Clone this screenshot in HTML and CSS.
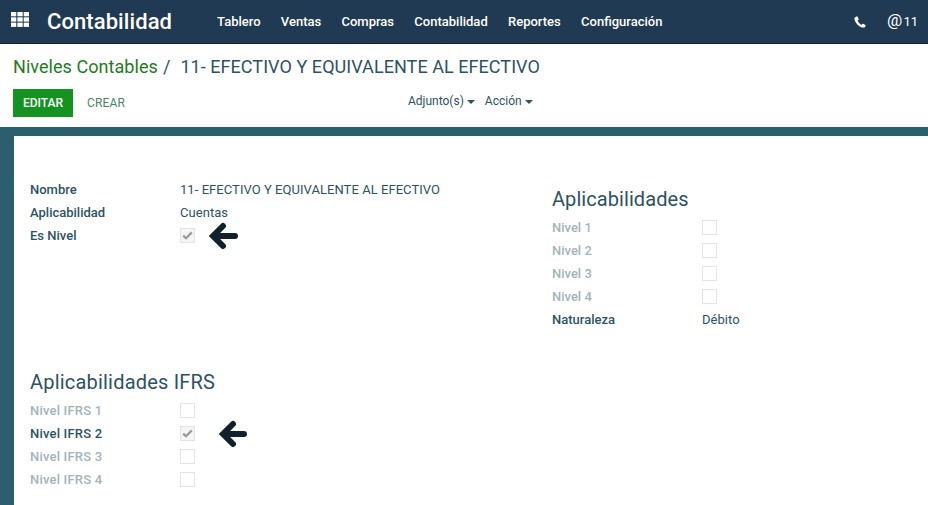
FILE: index.html
```html
<!DOCTYPE html>
<html lang="es">
<head>
    <meta charset="UTF-8">
    <title>Niveles Contables</title>
    <link rel="stylesheet" href="styles.css">
</head>
<body>
    <header class="topbar">
        <svg class="apps-icon" width="18" height="15" viewBox="0 0 18 15" fill="#fff">
            <rect x="0" y="0" width="5.3" height="4.3"/><rect x="6.4" y="0" width="5.3" height="4.3"/><rect x="12.7" y="0" width="5.3" height="4.3"/>
            <rect x="0" y="5.3" width="5.3" height="4.3"/><rect x="6.4" y="5.3" width="5.3" height="4.3"/><rect x="12.7" y="5.3" width="5.3" height="4.3"/>
            <rect x="0" y="10.6" width="5.3" height="4.3"/><rect x="6.4" y="10.6" width="5.3" height="4.3"/><rect x="12.7" y="10.6" width="5.3" height="4.3"/>
        </svg>
        <span class="brand">Contabilidad</span>
        <nav class="menu">
            <a href="#">Tablero</a>
            <a href="#">Ventas</a>
            <a href="#">Compras</a>
            <a href="#">Contabilidad</a>
            <a href="#">Reportes</a>
            <a href="#">Configuración</a>
        </nav>
        <div class="systray">
            <svg class="phone-icon" width="12" height="12" viewBox="0 0 12 12" fill="#fff">
                <path d="M2.6 0.4 L0.8 1.5 C0.3 2 0.3 3 0.7 4.2 C1.6 6.8 4.6 10.4 8 11.4 C9.4 11.8 10.4 11.6 11 11 L11.7 9.6 C11.8 9.3 11.7 9 11.4 8.9 L9 7.7 C8.7 7.6 8.5 7.7 8.3 7.9 L7.4 8.9 C5.8 8.2 4.2 6.2 3.6 4.6 L4.6 3.8 C4.8 3.6 4.9 3.3 4.7 3 L3.4 0.6 C3.2 0.3 2.9 0.2 2.6 0.4 Z"/>
            </svg>
            <span class="mentions"><span class="at">@</span>11</span>
        </div>
    </header>

    <section class="control-panel">
        <h1 class="breadcrumb"><a href="#">Niveles Contables</a><span class="sep">/</span>11- EFECTIVO Y EQUIVALENTE AL EFECTIVO</h1>
        <div class="actions">
            <div class="buttons">
                <button class="btn-primary">EDITAR</button>
                <button class="btn-link">CREAR</button>
            </div>
            <div class="sidebar-menus">
                <span class="dropdown">Adjunto(s)<i class="caret"></i></span>
                <span class="dropdown">Acción<i class="caret"></i></span>
            </div>
        </div>
    </section>

    <main class="form-area">
        <div class="sheet">
            <div class="top-groups">
                <div class="group group-left">
                    <div class="row"><span class="label">Nombre</span><span class="value">11- EFECTIVO Y EQUIVALENTE AL EFECTIVO</span></div>
                    <div class="row"><span class="label">Aplicabilidad</span><span class="value">Cuentas</span></div>
                    <div class="row">
                        <span class="label">Es Nivel</span>
                        <span class="check checked"><svg width="11" height="9" viewBox="0 0 11 9"><path d="M1.2 4.6 L4 7.2 L9.8 1.4" fill="none" stroke="#999" stroke-width="2.2"/></svg></span>
                        <svg class="arrow arrow-first" width="29" height="28" viewBox="0 0 29 28"><path d="M26 14 H5 M14 4 L4 14 L14 24" fill="none" stroke="#10202c" stroke-width="6" stroke-linecap="round"/></svg>
                    </div>
                </div>
                <div class="group group-right">
                    <h2 class="group-title">Aplicabilidades</h2>
                    <div class="row muted"><span class="label">Nivel 1</span><span class="check"></span></div>
                    <div class="row muted"><span class="label">Nivel 2</span><span class="check"></span></div>
                    <div class="row muted"><span class="label">Nivel 3</span><span class="check"></span></div>
                    <div class="row muted"><span class="label">Nivel 4</span><span class="check"></span></div>
                    <div class="row"><span class="label">Naturaleza</span><span class="value">Débito</span></div>
                </div>
            </div>
            <div class="group group-ifrs">
                <h2 class="group-title">Aplicabilidades IFRS</h2>
                <div class="row muted"><span class="label">Nivel IFRS 1</span><span class="check"></span></div>
                <div class="row">
                    <span class="label">Nivel IFRS 2</span>
                    <span class="check checked"><svg width="11" height="9" viewBox="0 0 11 9"><path d="M1.2 4.6 L4 7.2 L9.8 1.4" fill="none" stroke="#999" stroke-width="2.2"/></svg></span>
                    <svg class="arrow arrow-second" width="28" height="28" viewBox="0 0 28 28"><path d="M25 14 H5 M14 4 L4 14 L14 24" fill="none" stroke="#10202c" stroke-width="6" stroke-linecap="round"/></svg>
                </div>
                <div class="row muted"><span class="label">Nivel IFRS 3</span><span class="check"></span></div>
                <div class="row muted"><span class="label">Nivel IFRS 4</span><span class="check"></span></div>
            </div>
        </div>
    </main>
</body>
</html>
```
FILE: styles.css
```css
html, body {
    margin: 0;
    padding: 0;
    height: 505px;
    overflow: hidden;
}

body {
    background-color: #fff;
    color: #2c5364;
    font-family: Roboto, sans-serif;
    font-size: 13px;
}

a {
    color: inherit;
    text-decoration: none;
}

/* barra superior */
.topbar {
    display: flex;
    align-items: center;
    height: 43px;
    padding: 0 10px 0 11px;
    background-color: #1f3a52;
    border-bottom: 1px solid #10202c;
    color: #fff;
}

.apps-icon {
    flex: none;
    margin-bottom: 4px;
}

.brand {
    margin-left: 18px;
    font-size: 22px;
    font-weight: 500;
    line-height: 43px;
    letter-spacing: 0.08px;
}

.menu {
    display: flex;
    gap: 20.3px;
    margin-left: 45px;
    font-weight: 500;
}

.systray {
    display: flex;
    align-items: center;
    margin-left: auto;
}

.phone-icon {
    margin-top: 1px;
}

.mentions {
    margin-left: 21px;
    margin-bottom: 3px;
    font-size: 13px;
}

.at {
    margin-right: 1px;
    font-size: 17px;
}

/* panel de control */
.control-panel {
    height: 83px;
    padding: 0 13px;
}

.breadcrumb {
    margin: 0;
    padding-top: 11px;
    font-size: 18px;
    font-weight: 400;
    line-height: 24px;
    letter-spacing: 0.055px;
}

.breadcrumb a {
    color: #1e7c22;
}

.sep {
    margin: 0 10px 0 5px;
}

.actions {
    display: grid;
    grid-template-columns: 395px auto;
    margin-top: 10px;
}

.buttons {
    display: flex;
    align-items: center;
}

.btn-primary {
    width: 60px;
    height: 28px;
    padding: 0;
    border: 0;
    background-color: #149321;
    color: #fff;
    font: 500 12px Roboto, sans-serif;
}

.btn-link {
    margin-left: 14px;
    padding: 0;
    border: 0;
    background: none;
    color: #4a8466;
    font: 400 12px Roboto, sans-serif;
    letter-spacing: 0.15px;
}

.sidebar-menus {
    display: flex;
    gap: 10px;
    padding-top: 5px;
    font-size: 12px;
    line-height: 14px;
}

.caret {
    display: inline-block;
    margin-left: 3px;
    vertical-align: middle;
    border-top: 4px solid #2c5364;
    border-left: 4px solid transparent;
    border-right: 4px solid transparent;
}

/* formulario */
.form-area {
    height: 378px;
    padding: 9px 0 0 14px;
    box-sizing: border-box;
    background-color: #2c5f6d;
}

.sheet {
    height: 100%;
    padding-top: 42px;
    padding-left: 16px;
    box-sizing: border-box;
    background-color: #fff;
}

.top-groups {
    display: flex;
}

.group-left {
    width: 522px;
    flex: none;
}

.group-right {
    margin-top: 8px;
}

.group-ifrs {
    margin-top: 38px;
}

.group-title {
    margin: 0 0 4px;
    font-size: 20px;
    font-weight: 400;
    line-height: 26px;
    letter-spacing: 0.07px;
}

.group-ifrs .group-title {
    letter-spacing: 0.2px;
}

.row {
    display: flex;
    align-items: center;
    height: 23px;
}

.label {
    width: 150px;
    flex: none;
    font-weight: 500;
    color: #2c5364;
}

.group-ifrs .label {
    letter-spacing: 0.2px;
}

.value {
    letter-spacing: 0.05px;
}

.muted .label {
    color: #a3b4ba;
}

.check {
    display: flex;
    align-items: center;
    justify-content: center;
    width: 15px;
    height: 15px;
    box-sizing: border-box;
    border: 1px solid #e4e4e4;
    background-color: #fff;
}

.checked {
    background-color: #f5f5f5;
}

.arrow {
    flex: none;
}

.arrow-first {
    margin-left: 14px;
}

.arrow-second {
    margin-left: 24px;
}
```
